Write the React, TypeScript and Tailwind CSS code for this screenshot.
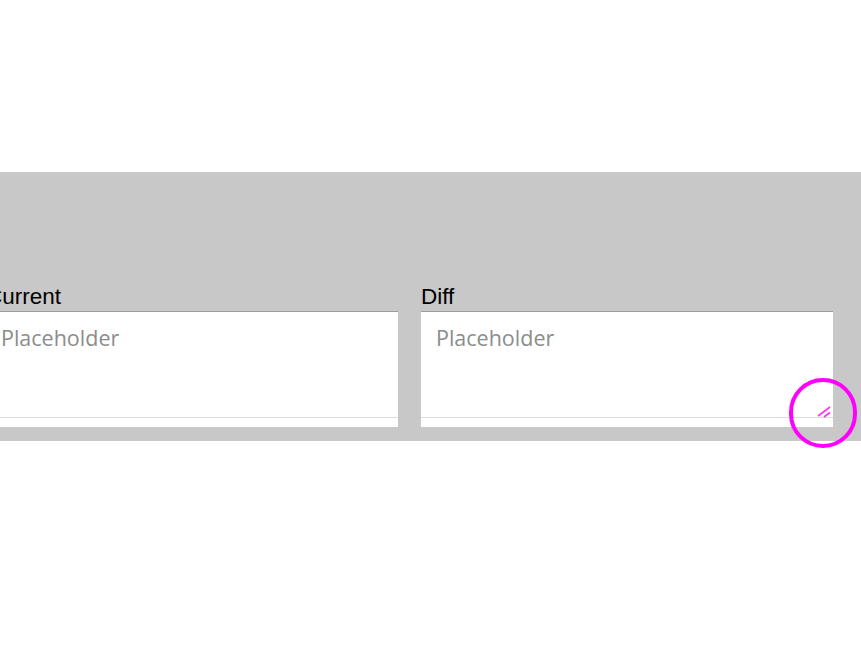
function Field({ label, withMark }: { label: string; withMark?: boolean }) {
  return (
    <div className="flex w-[412px] shrink-0 flex-col">
      <label className="h-[24px] text-[22.5px] leading-[24px] text-black [font-family:'Liberation_Sans',Arial,sans-serif]">
        {label}
      </label>
      <div className="relative mt-[2px] flex h-[116px] flex-col border-t border-[#9c9c9c] bg-white">
        <textarea
          placeholder="Placeholder"
          readOnly
          className="h-[106px] w-full resize-none border-b border-[#dcdcdc] bg-white px-[15px] pt-[12px] text-[21.5px] leading-[28px] outline-none placeholder:text-[#8c8c8c] [font-family:'Open_Sans',sans-serif]"
        />
        {withMark && (
          <>
            <svg
              className="absolute left-[395px] top-[92px]"
              width="16"
              height="14"
              viewBox="0 0 16 14"
            >
              <line x1="2" y1="12" x2="14" y2="3" stroke="#ff33ee" strokeWidth="1.6" />
              <line x1="8" y1="13" x2="14" y2="8.5" stroke="#ff33ee" strokeWidth="1.6" />
            </svg>
            <div className="absolute left-[368px] top-[66px] h-[70px] w-[68px] rounded-full border-4 border-[#ff00ff]" />
          </>
        )}
      </div>
    </div>
  );
}

export default function App() {
  return (
    <div className="min-h-[645px] w-full overflow-hidden bg-white">
      <div className="mt-[172px] flex h-[269px] bg-[#c8c8c8] pt-[113px]">
        <div className="-ml-[14px] flex gap-[23px]">
          <Field label="Current" />
          <Field label="Diff" withMark />
        </div>
      </div>
    </div>
  );
}
